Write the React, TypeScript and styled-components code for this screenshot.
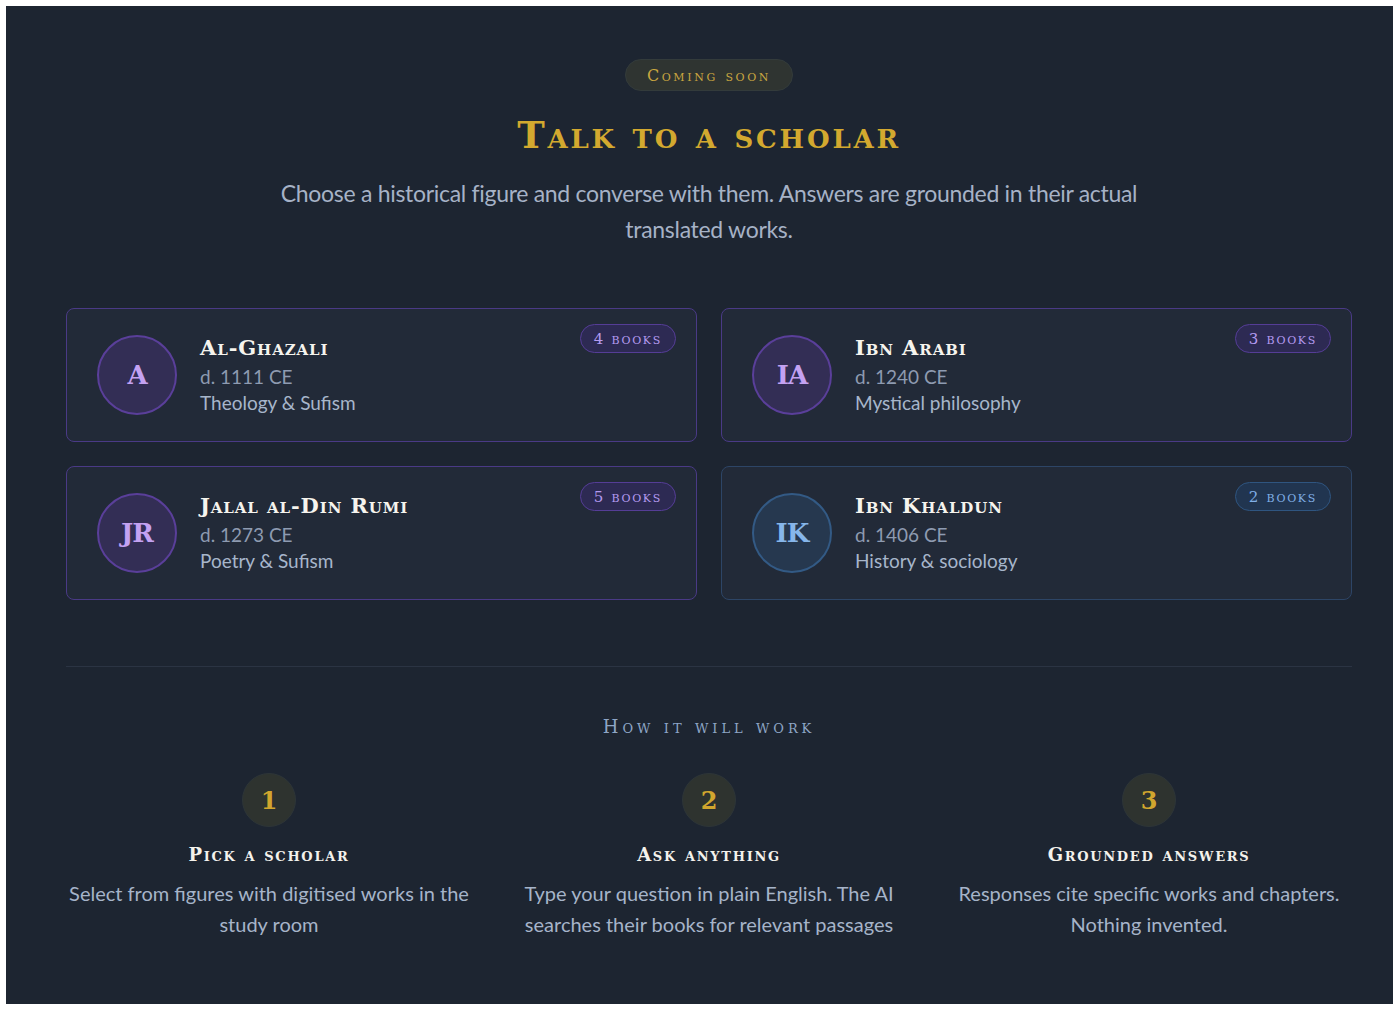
import { FC } from "react";
import styled, { createGlobalStyle } from "styled-components";

const GlobalStyle = createGlobalStyle`
    html, body {
        margin: 0;
        padding: 0;
        background: #ffffff;
    }
    body {
        padding: 6px;
        font-family: "Lato", "Liberation Sans", sans-serif;
    }
`;

const serif = `"DejaVu Serif", "Liberation Serif", serif`;

type Tone = "purple" | "blue";

const tones = {
    purple: {
        border: "#4a3a86",
        avatarBg: "#332e55",
        avatarBorder: "#5a3f9a",
        avatarText: "#c4a2f2",
        badgeBg: "#2d2a53",
        badgeBorder: "#553d96",
        badgeText: "#b49af0",
    },
    blue: {
        border: "#2d4566",
        avatarBg: "#26384f",
        avatarBorder: "#335a85",
        avatarText: "#86b6ea",
        badgeBg: "#213550",
        badgeBorder: "#2f5580",
        badgeText: "#80afe6",
    },
};

const Section = styled.section`
    height: 998px;
    box-sizing: border-box;
    background: #1d2531;
    padding: 53px 41px 0 60px;
    display: flex;
    flex-direction: column;
    align-items: center;
`;

const SoonPill = styled.div`
    height: 32px;
    padding: 0 21px;
    box-sizing: border-box;
    border-radius: 16px;
    background: #2f3431;
    border: 1px solid #333b3b;
    display: flex;
    align-items: center;
    font-family: ${serif};
    font-variant: small-caps;
    font-size: 16px;
    letter-spacing: 2.6px;
    color: #c9a640;
`;

const Title = styled.h1`
    margin: 19px 0 0;
    font-family: ${serif};
    font-variant: small-caps;
    font-weight: 700;
    font-size: 37px;
    letter-spacing: 2.8px;
    line-height: 50px;
    color: #d3a92f;
`;

const Lead = styled.p`
    margin: 15px 0 0;
    max-width: 880px;
    text-align: center;
    font-size: 23px;
    line-height: 36px;
    letter-spacing: -0.3px;
    color: #a6b2c6;
`;

const CardGrid = styled.div`
    margin-top: 61px;
    width: 100%;
    display: grid;
    grid-template-columns: 1fr 1fr;
    gap: 24px;
`;

const Card = styled.div<{ $tone: Tone }>`
    position: relative;
    height: 134px;
    box-sizing: border-box;
    border-radius: 8px;
    border: 1px solid ${(p) => tones[p.$tone].border};
    background: #222a38;
    padding: 0 30px;
    display: flex;
    align-items: center;
    gap: 23px;
`;

const Avatar = styled.div<{ $tone: Tone }>`
    width: 80px;
    height: 80px;
    flex-shrink: 0;
    box-sizing: border-box;
    border-radius: 50%;
    background: ${(p) => tones[p.$tone].avatarBg};
    border: 2px solid ${(p) => tones[p.$tone].avatarBorder};
    display: flex;
    align-items: center;
    justify-content: center;
    font-family: ${serif};
    font-weight: 700;
    font-size: 26px;
    letter-spacing: -1px;
    color: ${(p) => tones[p.$tone].avatarText};
`;

const Info = styled.div`
    display: flex;
    flex-direction: column;
    margin-top: -1px;
`;

const Name = styled.div`
    font-family: ${serif};
    font-variant: small-caps;
    font-weight: 700;
    font-size: 21px;
    letter-spacing: 0.9px;
    line-height: 28px;
    margin-bottom: 2px;
    color: #f6f4ee;
`;

const Died = styled.div`
    font-size: 19px;
    line-height: 26px;
    color: #8e9bb1;
`;

const Field = styled.div`
    font-size: 19px;
    line-height: 26px;
    color: #a7b6cb;
`;

const BooksBadge = styled.span<{ $tone: Tone }>`
    position: absolute;
    top: 15px;
    right: 20px;
    height: 29px;
    padding: 0 13px;
    box-sizing: border-box;
    border-radius: 15px;
    background: ${(p) => tones[p.$tone].badgeBg};
    border: 1px solid ${(p) => tones[p.$tone].badgeBorder};
    color: ${(p) => tones[p.$tone].badgeText};
    display: flex;
    align-items: center;
    font-family: ${serif};
    font-variant: small-caps;
    font-size: 15px;
    letter-spacing: 1.7px;
`;

const Divider = styled.hr`
    width: 100%;
    margin: 66px 0 0;
    border: none;
    border-top: 1px solid #2b3443;
`;

const HowTitle = styled.h2`
    margin: 49px 0 0;
    font-family: ${serif};
    font-variant: small-caps;
    font-weight: 400;
    font-size: 18px;
    letter-spacing: 3.9px;
    color: #8ea6c6;
`;

const Steps = styled.div`
    margin-top: 36px;
    width: 100%;
    display: grid;
    grid-template-columns: repeat(3, 1fr);
    gap: 34px;
`;

const Step = styled.div`
    display: flex;
    flex-direction: column;
    align-items: center;
    text-align: center;
`;

const StepNum = styled.div`
    width: 54px;
    height: 54px;
    border-radius: 50%;
    background: #2e332f;
    border: 1px solid #2d3538;
    box-sizing: border-box;
    display: flex;
    align-items: center;
    justify-content: center;
    font-family: ${serif};
    font-weight: 700;
    font-size: 24px;
    color: #d1a62e;
`;

const StepTitle = styled.h3`
    margin: 17px 0 0;
    font-family: ${serif};
    font-variant: small-caps;
    font-weight: 700;
    font-size: 18px;
    letter-spacing: 1.7px;
    color: #f4f2ec;
`;

const StepText = styled.p`
    margin: 13px 0 0;
    font-size: 20px;
    line-height: 31px;
    letter-spacing: 0;
    color: #a6b4c9;
`;

const scholars: { initials: string; name: string; died: string; field: string; books: number; tone: Tone }[] = [
    { initials: "A", name: "Al-Ghazali", died: "d. 1111 CE", field: "Theology & Sufism", books: 4, tone: "purple" },
    { initials: "IA", name: "Ibn Arabi", died: "d. 1240 CE", field: "Mystical philosophy", books: 3, tone: "purple" },
    { initials: "JR", name: "Jalal al-Din Rumi", died: "d. 1273 CE", field: "Poetry & Sufism", books: 5, tone: "purple" },
    { initials: "IK", name: "Ibn Khaldun", died: "d. 1406 CE", field: "History & sociology", books: 2, tone: "blue" },
];

const steps = [
    { title: "Pick a scholar", text: "Select from figures with digitised works in the study room" },
    { title: "Ask anything", text: "Type your question in plain English. The AI searches their books for relevant passages" },
    { title: "Grounded answers", text: "Responses cite specific works and chapters. Nothing invented." },
];

const App: FC = () => {
    return (
        <>
            <GlobalStyle />
            <Section>
                <SoonPill>Coming soon</SoonPill>
                <Title>Talk to a scholar</Title>
                <Lead>
                    Choose a historical figure and converse with them. Answers are grounded in their actual translated works.
                </Lead>

                <CardGrid>
                    {scholars.map((s) => (
                        <Card key={s.name} $tone={s.tone}>
                            <Avatar $tone={s.tone}>{s.initials}</Avatar>
                            <Info>
                                <Name>{s.name}</Name>
                                <Died>{s.died}</Died>
                                <Field>{s.field}</Field>
                            </Info>
                            <BooksBadge $tone={s.tone}>{s.books} books</BooksBadge>
                        </Card>
                    ))}
                </CardGrid>

                <Divider />
                <HowTitle>How it will work</HowTitle>

                <Steps>
                    {steps.map((st, i) => (
                        <Step key={st.title}>
                            <StepNum>{i + 1}</StepNum>
                            <StepTitle>{st.title}</StepTitle>
                            <StepText>{st.text}</StepText>
                        </Step>
                    ))}
                </Steps>
            </Section>
        </>
    );
};

export default App;
